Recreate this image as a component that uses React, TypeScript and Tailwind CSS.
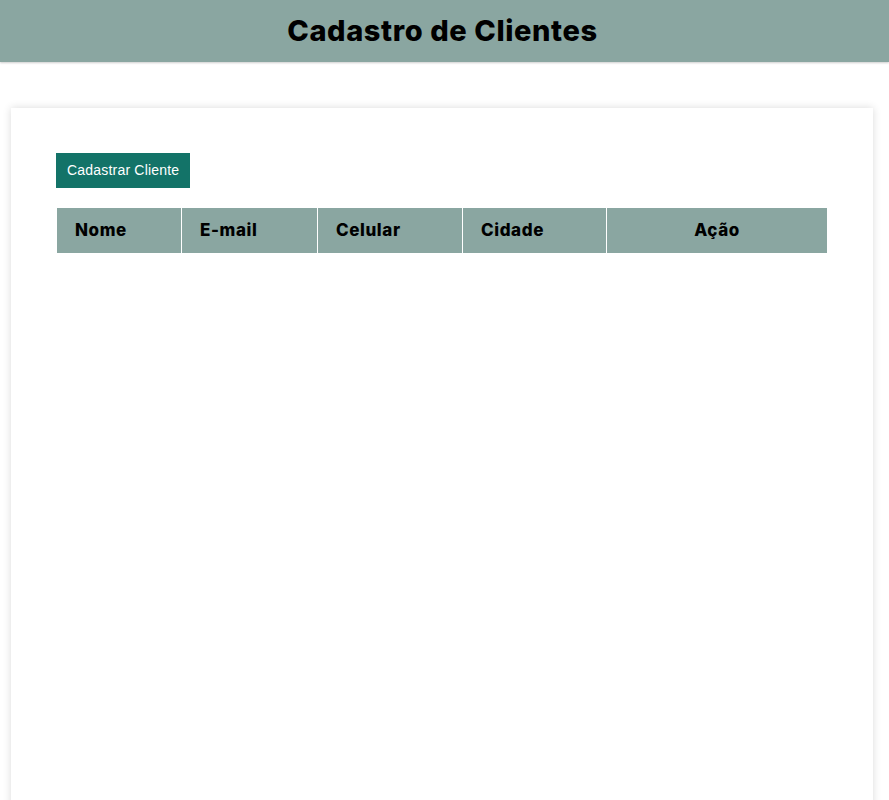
export default function App() {
  const cols = [
    { label: "Nome", w: "w-[124px]", center: false },
    { label: "E-mail", w: "w-[135px]", center: false },
    { label: "Celular", w: "w-[144px]", center: false },
    { label: "Cidade", w: "w-[143px]", center: false },
    { label: "Ação", w: "flex-1", center: true },
  ];

  return (
    <div className="min-h-screen bg-white font-['Inter',sans-serif]">
      <header className="h-[62px] bg-[#8aa6a1] flex items-center justify-center shadow-[0_1px_2px_rgba(0,0,0,0.2)]">
        <h1 className="text-[29px] font-extrabold text-black tracking-[0.6px] -ml-[4px]">Cadastro de Clientes</h1>
      </header>

      <main className="pt-[46px] pl-[11px]">
        <div className="w-[862px] min-h-[760px] bg-white shadow-[0_0_8px_rgba(0,0,0,0.15)] px-[45px] pt-[45px]">
          <button className="h-[35px] px-[11px] bg-[#137368] text-white text-[14px] tracking-[0.2px] font-['Liberation_Sans',Arial,sans-serif]">
            Cadastrar Cliente
          </button>

          <div className="mt-[20px] ml-px w-[770px] flex gap-px bg-white">
            {cols.map((c) => (
              <div
                key={c.label}
                className={`${c.w} h-[45px] bg-[#8aa6a1] flex items-center px-[18px] text-[17px] font-extrabold tracking-[0.6px] text-black ${c.center ? "justify-center" : ""}`}
              >
                {c.label}
              </div>
            ))}
          </div>
        </div>
      </main>
    </div>
  );
}
